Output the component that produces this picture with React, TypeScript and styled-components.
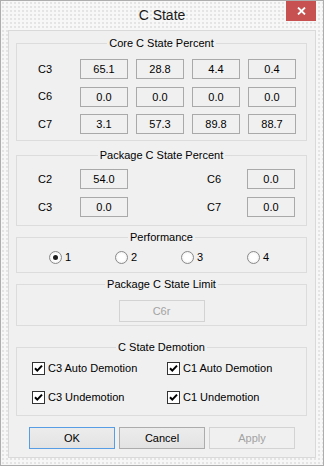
import { Fragment } from "react";
import styled, { createGlobalStyle } from "styled-components";

const GlobalStyle = createGlobalStyle`
    html, body {
        margin: 0;
        padding: 0;
        background: #ffffff;
    }
    body {
        font-family: "Liberation Sans", Arial, sans-serif;
        font-size: 11px;
        color: #000000;
    }
`;

const Window = styled.div`
    width: 324px;
    height: 466px;
    box-sizing: border-box;
    border: 1px solid #adadad;
    background-color: #f7f7f7;
    background-image: radial-gradient(circle, #dadada 0.6px, transparent 0.9px);
    background-size: 4px 4px;
    display: flex;
    flex-direction: column;
    padding: 0 7px 7px;
`;

const TitleBar = styled.div`
    height: 29px;
    display: grid;
    grid-template-columns: 30px 1fr 30px;
    align-items: start;
`;

const Title = styled.div`
    grid-column: 2;
    text-align: center;
    font-size: 14px;
    line-height: 28px;
    color: #1a1a1a;
`;

const CloseButton = styled.div`
    grid-column: 3;
    width: 30px;
    height: 20px;
    background: #c75050;
    display: flex;
    align-items: center;
    justify-content: center;
`;

const Client = styled.div`
    flex: 1;
    border: 1px solid #d9d9d9;
    background: #f0f0f0;
    display: flex;
    flex-direction: column;
    padding: 0 8px 0 7px;
`;

const Group = styled.div<{ $top: number; $height: number }>`
    box-sizing: border-box;
    margin-top: ${(p) => p.$top}px;
    height: ${(p) => p.$height}px;
    border: 1px solid #dcdcdc;
    display: flex;
    flex-direction: column;
`;

const GroupTitle = styled.div`
    align-self: center;
    margin-top: -7px;
    padding: 0 2px;
    line-height: 13px;
    background: #f0f0f0;
`;

const CoreGrid = styled.div`
    margin-top: 9px;
    padding-left: 21px;
    display: grid;
    grid-template-columns: 34px repeat(4, 48px);
    column-gap: 8px;
    row-gap: 7.5px;
    align-items: center;
`;

const PackageGrid = styled.div`
    margin-top: 7px;
    padding-left: 21px;
    display: grid;
    grid-template-columns: 42px 48px 79px 40px 48px;
    row-gap: 8px;
    align-items: center;
`;

const Label = styled.span`
    line-height: 13px;
`;

const ValueBox = styled.div`
    box-sizing: border-box;
    width: 48px;
    height: 20px;
    border: 1px solid #a9a9a9;
    background: #f0f0f0;
    text-align: center;
    line-height: 18px;
`;

const RadioRow = styled.div`
    margin-top: 7px;
    padding-left: 32px;
    display: grid;
    grid-template-columns: repeat(4, 66px);
`;

const Option = styled.label`
    display: flex;
    align-items: center;
    gap: 3px;
    line-height: 13px;
`;

const RadioCircle = styled.span<{ $checked?: boolean }>`
    box-sizing: border-box;
    width: 13px;
    height: 13px;
    border-radius: 50%;
    border: 1px solid #8a8a8a;
    background: radial-gradient(circle, #ffffff 40%, #e6e6e6 100%);
    display: flex;
    align-items: center;
    justify-content: center;
    &::after {
        content: "";
        width: 5px;
        height: 5px;
        border-radius: 50%;
        background: ${(p) => (p.$checked ? "#1e1e1e" : "transparent")};
    }
`;

const CenterRow = styled.div`
    margin-top: 9px;
    display: flex;
    justify-content: center;
`;

const Button = styled.div<{ $variant?: "default" | "normal" | "disabled" }>`
    box-sizing: border-box;
    width: 86px;
    height: 22px;
    line-height: 20px;
    text-align: center;
    border: 1px solid
        ${(p) =>
            p.$variant === "default"
                ? "#569de5"
                : p.$variant === "disabled"
                ? "#d3d3d3"
                : "#acacac"};
    background: ${(p) =>
        p.$variant === "disabled"
            ? "#f0f0f0"
            : "linear-gradient(#ececec, #e3e3e3)"};
    color: ${(p) => (p.$variant === "disabled" ? "#a3a3a3" : "#000000")};
`;

const CheckGrid = styled.div`
    margin-top: 8px;
    padding-left: 15px;
    display: grid;
    grid-template-columns: 135px 135px;
    row-gap: 16px;
`;

const CheckBoxSquare = styled.span`
    box-sizing: border-box;
    width: 13px;
    height: 13px;
    border: 1px solid #333333;
    background: #ffffff;
    display: flex;
    align-items: center;
    justify-content: center;
`;

const ButtonRow = styled.div`
    margin-top: 11px;
    padding-left: 13px;
    display: flex;
    gap: 4px;
`;

const Check = () => (
    <CheckBoxSquare>
        <svg width="11" height="11" viewBox="0 0 11 11">
            <path
                d="M2 5.2 L4.3 7.6 L9 2.6"
                fill="none"
                stroke="#000"
                strokeWidth="2"
            />
        </svg>
    </CheckBoxSquare>
);

const core = [
    { name: "C3", values: ["65.1", "28.8", "4.4", "0.4"] },
    { name: "C6", values: ["0.0", "0.0", "0.0", "0.0"] },
    { name: "C7", values: ["3.1", "57.3", "89.8", "88.7"] },
];

const demotions = [
    "C3 Auto Demotion",
    "C1 Auto Demotion",
    "C3 Undemotion",
    "C1 Undemotion",
];

export default function App() {
    return (
        <>
            <GlobalStyle />
            <Window>
                <TitleBar>
                    <Title>C State</Title>
                    <CloseButton>
                        <svg width="9" height="8" viewBox="0 0 9 8">
                            <path
                                d="M1 0.5 L8 7.5 M8 0.5 L1 7.5"
                                stroke="#fff"
                                strokeWidth="1.8"
                            />
                        </svg>
                    </CloseButton>
                </TitleBar>
                <Client>
                    <Group $top={12} $height={98}>
                        <GroupTitle>Core C State Percent</GroupTitle>
                        <CoreGrid>
                            {core.map((row) => (
                                <Fragment key={row.name}>
                                    <Label>{row.name}</Label>
                                    {row.values.map((v, i) => (
                                        <ValueBox key={i}>{v}</ValueBox>
                                    ))}
                                </Fragment>
                            ))}
                        </CoreGrid>
                    </Group>

                    <Group $top={14} $height={71}>
                        <GroupTitle>Package C State Percent</GroupTitle>
                        <PackageGrid>
                            <Label>C2</Label>
                            <ValueBox>54.0</ValueBox>
                            <span />
                            <Label>C6</Label>
                            <ValueBox>0.0</ValueBox>
                            <Label>C3</Label>
                            <ValueBox>0.0</ValueBox>
                            <span />
                            <Label>C7</Label>
                            <ValueBox>0.0</ValueBox>
                        </PackageGrid>
                    </Group>

                    <Group $top={11} $height={36}>
                        <GroupTitle>Performance</GroupTitle>
                        <RadioRow>
                            {["1", "2", "3", "4"].map((n) => (
                                <Option key={n}>
                                    <RadioCircle $checked={n === "1"} />
                                    {n}
                                </Option>
                            ))}
                        </RadioRow>
                    </Group>

                    <Group $top={11} $height={42}>
                        <GroupTitle>Package C State Limit</GroupTitle>
                        <CenterRow>
                            <Button $variant="disabled">C6r</Button>
                        </CenterRow>
                    </Group>

                    <Group $top={21} $height={69}>
                        <GroupTitle>C State Demotion</GroupTitle>
                        <CheckGrid>
                            {demotions.map((d) => (
                                <Option key={d}>
                                    <Check />
                                    {d}
                                </Option>
                            ))}
                        </CheckGrid>
                    </Group>

                    <ButtonRow>
                        <Button $variant="default">OK</Button>
                        <Button $variant="normal">Cancel</Button>
                        <Button $variant="disabled">Apply</Button>
                    </ButtonRow>
                </Client>
            </Window>
        </>
    );
}
